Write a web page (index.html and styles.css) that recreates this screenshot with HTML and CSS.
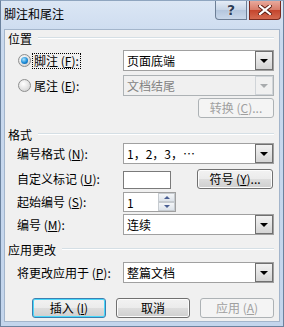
FILE: index.html
```html
<!DOCTYPE html>
<html lang="zh-CN">
<head>
  <meta charset="UTF-8">
  <title>脚注和尾注</title>
  <link rel="stylesheet" href="styles.css">
</head>
<body>

  <div class="window">
    <div class="titlebar">
      <span class="title">脚注和尾注</span>
      <div class="capBtns">
        <span class="cap help">?</span>
        <span class="cap close">
          <svg width="14" height="10" viewBox="0 0 14 10">
            <path d="M2 1 L12 9 M12 1 L2 9" stroke="#5a1a10" stroke-width="4" stroke-linecap="square"/>
            <path d="M2 1 L12 9 M12 1 L2 9" stroke="#fff" stroke-width="2.2" stroke-linecap="square"/>
          </svg>
        </span>
      </div>
    </div>

    <div class="client">
      <div class="groupHead first"><span>位置</span><i class="rule"></i></div>

      <div class="row r1">
        <div class="label radioLabel">
          <span class="radio checked"></span>
          <span class="focus">脚注 (<u>F</u>):</span>
        </div>
        <div class="combo">页面底端<span class="arrow"></span></div>
      </div>

      <div class="row r2">
        <div class="label radioLabel">
          <span class="radio"></span>
          <span class="plain">尾注 (<u>E</u>):</span>
        </div>
        <div class="combo disabled">文档结尾<span class="arrow"></span></div>
      </div>

      <div class="row r3 right">
        <button class="btn disabled wide">转换 (<u>C</u>)...</button>
      </div>

      <div class="groupHead second"><span>格式</span><i class="rule"></i></div>

      <div class="row r4">
        <div class="label">编号格式 (<u>N</u>):</div>
        <div class="combo">1，2，3，…<span class="arrow"></span></div>
      </div>

      <div class="row r5">
        <div class="label">自定义标记 (<u>U</u>):</div>
        <div class="textbox"></div>
        <button class="btn wide sym">符号 (<u>Y</u>)...</button>
      </div>

      <div class="row r6">
        <div class="label">起始编号 (<u>S</u>):</div>
        <div class="spinner">1<span class="spin"><i class="up"></i><i class="down"></i></span></div>
      </div>

      <div class="row r7">
        <div class="label">编号 (<u>M</u>):</div>
        <div class="combo">连续<span class="arrow"></span></div>
      </div>

      <div class="groupHead third"><span>应用更改</span><i class="rule"></i></div>

      <div class="row r8">
        <div class="label">将更改应用于 (<u>P</u>):</div>
        <div class="combo">整篇文档<span class="arrow"></span></div>
      </div>

      <div class="footer">
        <button class="btn default">插入 (<u>I</u>)</button>
        <button class="btn">取消</button>
        <button class="btn disabled">应用 (<u>A</u>)</button>
      </div>
    </div>
  </div>

</body>
</html>
```

FILE: styles.css
```css
* {
  box-sizing: border-box;
}

html, body {
  margin: 0;
  padding: 0;
  font-family: "Noto Sans CJK SC", "Liberation Sans", sans-serif;
  font-size: 12px;
  color: #000;
}

.window {
  width: 284px;
  height: 327px;
  background: linear-gradient(#dbe6f4, #c9d9ee 40px, #c3d5ec);
  border: 1px solid #6b829e;
  border-top-color: #8fa5bf;
  display: flex;
  flex-direction: column;
  overflow: hidden;
}

.titlebar {
  height: 28px;
  display: flex;
  align-items: flex-start;
  justify-content: space-between;
}

.title {
  margin: 6px 0 0 3px;
  line-height: 14px;
  color: #000;
}

.capBtns {
  display: flex;
  gap: 2px;
  margin-right: 2px;
}

.cap {
  width: 32px;
  height: 19px;
  border: 1px solid #6d7f96;
  border-top: none;
  display: flex;
  align-items: center;
  justify-content: center;
}

.help {
  border-radius: 0 0 0 4px;
  background: linear-gradient(#e4ecf6, #c6d4e6 50%, #b4c6dd 51%, #c9d8ea);
  font-family: "DejaVu Sans", sans-serif;
  font-weight: bold;
  font-size: 14px;
  color: #2f3f57;
  text-shadow: 0 0 1px #fff, 0 0 1px #fff;
}

.close {
  border-color: #7a2a1f;
  border-radius: 0 0 4px 0;
  background: linear-gradient(#e8a99c, #d77b68 50%, #c4442c 51%, #d46a50);
}

.client {
  flex: 1;
  margin: 0 3px 4px 3px;
  background: #f0f0f0;
  border: 1px solid #a3b5cb;
  display: flex;
  flex-direction: column;
}

.groupHead {
  display: flex;
  align-items: center;
  height: 14px;
  padding: 0 5px 0 3px;
}

.groupHead.first { margin-top: 1px; }
.groupHead.second { margin-top: 9px; }
.groupHead.third { margin-top: 7px; }

.rule {
  flex: 1;
  height: 2px;
  margin-left: 6px;
  border-top: 1px solid #d5dfe5;
  border-bottom: 1px solid #fff;
}

.row {
  display: flex;
  align-items: center;
  height: 21px;
  padding-left: 12px;
}

.row.right {
  justify-content: flex-end;
  padding-right: 5px;
  height: 20px;
}

.r1 { margin-top: 5px; }
.r2 { margin-top: 4px; }
.r3 { margin-top: 2px; }
.r4 { margin-top: 2px; }
.r5 { margin-top: 5px; height: 20px; }
.r6 { margin-top: 3px; height: 20px; }
.r7 { margin-top: 2px; }
.r8 { margin-top: 6px; }

.label {
  width: 106px;
  line-height: 14px;
  white-space: nowrap;
}

.radioLabel {
  display: flex;
  align-items: center;
}

.radio {
  width: 13px;
  height: 13px;
  margin-left: 1px;
  margin-right: 2px;
  border-radius: 50%;
  border: 1px solid #8e8f8f;
  background: radial-gradient(circle at 40% 35%, #ffffff, #e0e0e0 60%, #c8c8c8);
  position: relative;
}

.radio.checked::after {
  content: "";
  position: absolute;
  left: 2px;
  top: 2px;
  width: 7px;
  height: 7px;
  border-radius: 50%;
  background: radial-gradient(circle at 40% 35%, #a9e4ff, #1a8ad6 55%, #0b4e8f);
}

.focus {
  padding: 0 1px;
  outline: 1px dotted #000;
  outline-offset: 0;
}

.plain {
  padding: 0 1px;
}

.combo {
  width: 151px;
  height: 21px;
  background: #fff;
  border: 1px solid #a0a0a0;
  display: flex;
  align-items: center;
  padding-left: 3px;
  position: relative;
  line-height: 14px;
}

.combo .arrow {
  position: absolute;
  right: 0;
  top: 0;
  width: 18px;
  height: 19px;
  border: 1px solid #707070;
  background: linear-gradient(#f2f2f2, #e4e4e4 50%, #d4d4d4);
  display: flex;
  align-items: center;
  justify-content: center;
}

.combo .arrow::after {
  content: "";
  border-left: 4px solid transparent;
  border-right: 4px solid transparent;
  border-top: 4px solid #000;
}

.combo.disabled {
  background: #f0f0f0;
  border-color: #adb2b5;
  color: #838383;
}

.combo.disabled .arrow {
  border-color: #d0d4d8;
  background: #f0f0f0;
}

.combo.disabled .arrow::after {
  border-top-color: #a8abad;
}

.textbox {
  width: 48px;
  height: 18px;
  background: #fff;
  border: 1px solid #7a7a7a;
  margin-top: 1px;
}

.spinner {
  width: 53px;
  height: 20px;
  background: #fff;
  border: 1px solid #a0a0a0;
  display: flex;
  align-items: center;
  padding-left: 3px;
  position: relative;
}

.spin {
  position: absolute;
  right: 0;
  top: 0;
  width: 17px;
  height: 18px;
  display: flex;
  flex-direction: column;
}

.spin i {
  flex: 1;
  border: 1px solid #c6cbd0;
  background: linear-gradient(#f4f6f8, #dde3ea);
  display: flex;
  align-items: center;
  justify-content: center;
}

.spin .up::after {
  content: "";
  border-left: 3px solid transparent;
  border-right: 3px solid transparent;
  border-bottom: 3px solid #4a5f93;
}

.spin .down::after {
  content: "";
  border-left: 3px solid transparent;
  border-right: 3px solid transparent;
  border-top: 3px solid #4a5f93;
}

.btn {
  width: 74px;
  height: 20px;
  padding: 0;
  font: inherit;
  color: #000;
  border: 1px solid #707070;
  border-radius: 3px;
  background: linear-gradient(#f2f2f2, #ebebeb 50%, #dddddd 51%, #cfcfcf);
  box-shadow: inset 0 0 0 1px #fcfcfc;
  line-height: 14px;
}

.btn.wide {
  width: 76px;
}

.btn.sym {
  margin-left: 26px;
}

.btn.default {
  border-color: #3c7fb1;
  box-shadow: inset 0 0 0 1px #48d8fb;
}

.btn.disabled {
  color: #a0a0a0;
  border-color: #adb2b5;
  background: #f4f4f4;
  box-shadow: none;
}

.footer {
  display: flex;
  justify-content: flex-end;
  gap: 10px;
  margin-top: 15px;
  padding-right: 5px;
}
```
